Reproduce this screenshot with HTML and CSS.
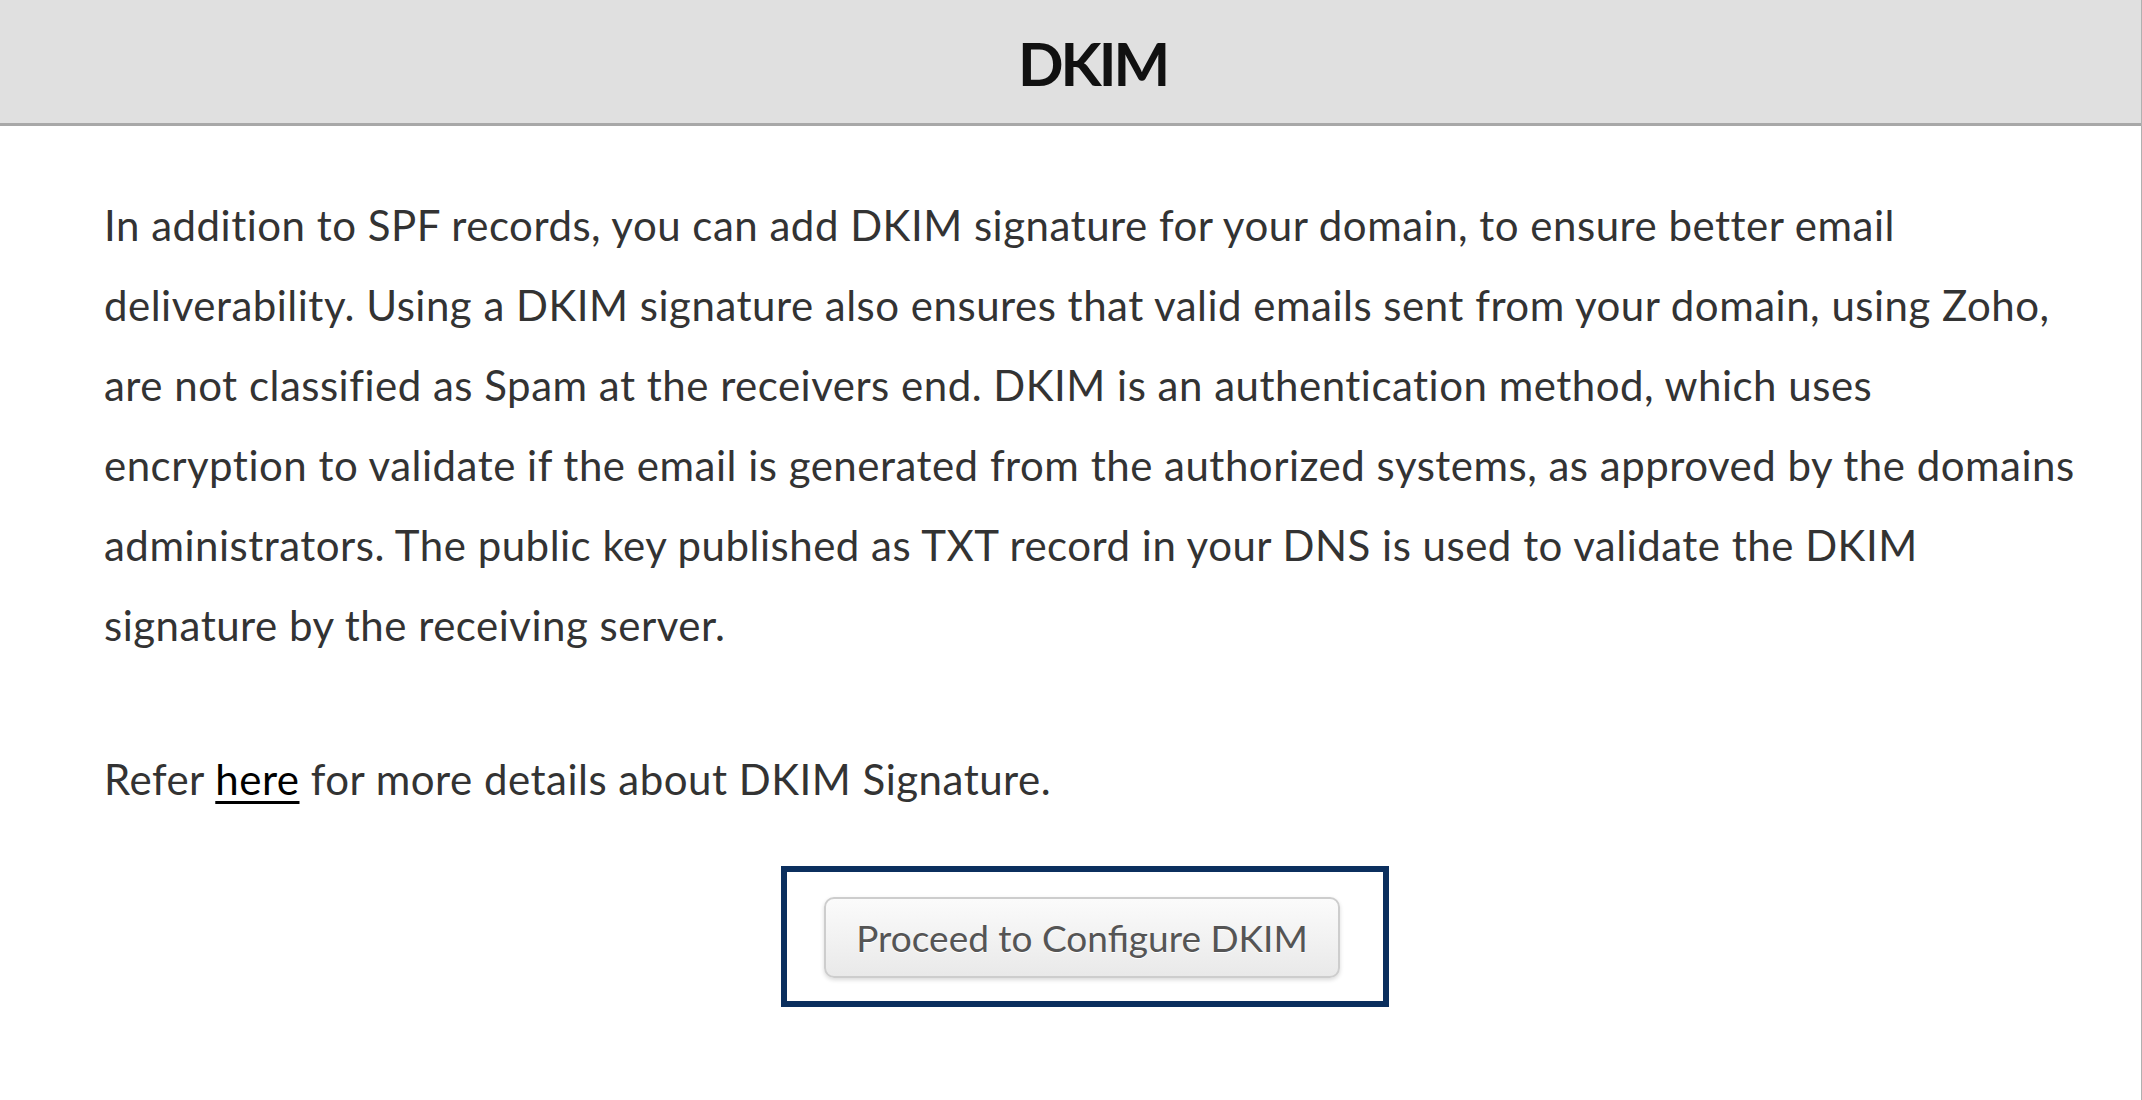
FILE: index.html
```html
<!DOCTYPE html>
<html>
<head>
<meta charset="utf-8">
<link rel="stylesheet" href="styles.css">
</head>
<body>
<div class="page">
  <header class="header"><h1 class="title">DKIM</h1></header>
  <main class="content">
    <p class="desc">In addition to SPF records, you can add DKIM signature for your domain, to ensure better email<br>deliverability. Using a DKIM signature also ensures that valid emails sent from your domain, using Zoho,<br>are not classified as Spam at the receivers end. DKIM is an authentication method, which uses<br>encryption to validate if the email is generated from the authorized systems, as approved by the domains<br>administrators. The public key published as TXT record in your DNS is used to validate the DKIM<br>signature by the receiving server.</p>
    <p class="refer">Refer <a class="link" href="#">here</a> for more details about DKIM Signature.</p>
    <div class="actions">
      <div class="focus-box">
        <button class="btn" type="button">Proceed to Configure DKIM</button>
      </div>
    </div>
  </main>
</div>
</body>
</html>
```
FILE: styles.css
```css
html, body {
  margin: 0;
  padding: 0;
  background: #ffffff;
}
body {
  font-family: "Lato", "Liberation Sans", sans-serif;
}
.page {
  width: 2141px;
  height: 1100px;
  border-right: 1px solid #b0b0b0;
  box-sizing: content-box;
  overflow: hidden;
}
.header {
  height: 123px;
  background: #e0e0e0;
  border-bottom: 3px solid #a8a8a8;
  display: flex;
  align-items: center;
  justify-content: center;
  padding-left: 44px;
}
.title {
  margin: 0;
  font-size: 60px;
  font-weight: 700;
  letter-spacing: -3px;
  color: #111111;
  line-height: 1;
  padding-top: 2px;
}
.content {
  padding: 59px 75px 0 104px;
}
.desc {
  margin: 0;
  font-size: 42px;
  letter-spacing: 0.5px;
  line-height: 80px;
  color: #333333;
  white-space: nowrap;
}
.refer {
  margin: 74px 0 0 0;
  font-size: 42px;
  letter-spacing: 0.5px;
  line-height: 80px;
  color: #333333;
  white-space: nowrap;
}
.link {
  color: #000000;
  text-decoration: underline;
  text-underline-offset: 6px;
  text-decoration-thickness: 3px;
}
.actions {
  display: flex;
  justify-content: center;
  margin-top: 47px;
}
.focus-box {
  border: 6px solid #0b2f5e;
  padding: 25px 43px 23px 37px;
  display: flex;
}
.btn {
  width: 516px;
  height: 81px;
  border: 2px solid #cdcdcd;
  border-radius: 10px;
  background: linear-gradient(#fbfbfb, #e9e9e9);
  box-shadow: 0 2px 4px rgba(0, 0, 0, 0.15);
  font-family: "Lato", "Liberation Sans", sans-serif;
  font-size: 37px;
  color: #555555;
  text-shadow: 0 1px 0 #ffffff;
  padding: 0;
}
```
